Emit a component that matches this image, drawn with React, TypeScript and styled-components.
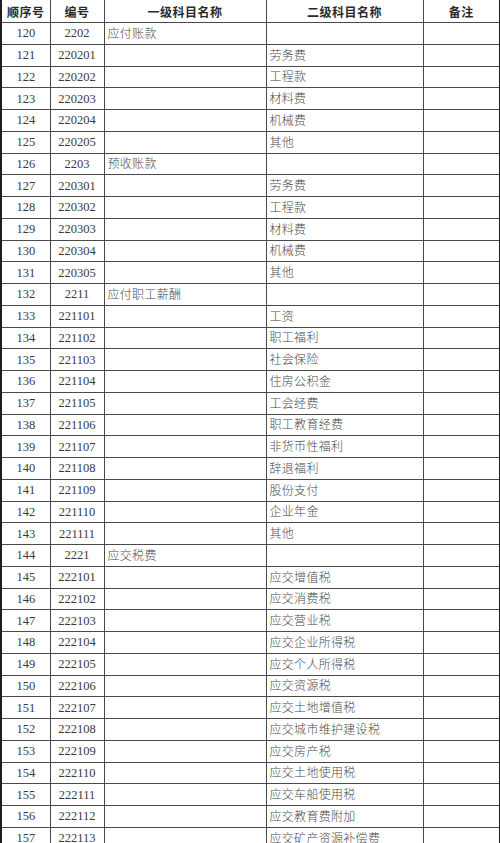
import styled, { createGlobalStyle } from "styled-components";
import { ReactElement } from "react";

const GlobalStyle = createGlobalStyle`
  html, body {
    margin: 0;
    padding: 0;
    background: #fff;
  }
`;

const Sheet = styled.table`
  width: 499px;
  table-layout: fixed;
  border-collapse: collapse;
  border-left: 2px solid #1e1e1e;
  border-right: 2px solid #1e1e1e;
  font-family: "Liberation Serif", "Noto Sans CJK SC", serif;
  font-size: 12.5px;
  color: #3a3a3a;
`;

const HeadRow = styled.tr`
  height: 22.7px;
`;

const HeadCell = styled.th`
  font-family: "Noto Sans CJK SC", sans-serif;
  font-weight: 700;
  font-size: 12px;
  color: #2a2a2a;
  text-align: center;
  padding: 0;
  border: 1px solid #4a4a4a;
  border-top: none;
  letter-spacing: 0.5px;
`;

const Row = styled.tr`
  height: 21.75px;
`;

const Cell = styled.td<{ $align?: "left" | "center" }>`
  padding: 0 0 0 ${(p) => (p.$align === "left" ? "3px" : "0")};
  text-align: ${(p) => p.$align ?? "center"};
  border: 1px solid #4a4a4a;
  white-space: nowrap;
  overflow: hidden;
  line-height: 1;
`;

const Hanzi = styled.span`
  font-family: "Noto Sans CJK SC", sans-serif;
  font-weight: 300;
  font-size: 12px;
  color: #4a4a4a;
  letter-spacing: 0.3px;
`;

type Item = { no: number; code: string; first?: string; second?: string };

const groups: { code: string; name: string; subs: string[] }[] = [
  { code: "2202", name: "应付账款", subs: ["劳务费", "工程款", "材料费", "机械费", "其他"] },
  { code: "2203", name: "预收账款", subs: ["劳务费", "工程款", "材料费", "机械费", "其他"] },
  {
    code: "2211",
    name: "应付职工薪酬",
    subs: [
      "工资",
      "职工福利",
      "社会保险",
      "住房公积金",
      "工会经费",
      "职工教育经费",
      "非货币性福利",
      "辞退福利",
      "股份支付",
      "企业年金",
      "其他",
    ],
  },
  {
    code: "2221",
    name: "应交税费",
    subs: [
      "应交增值税",
      "应交消费税",
      "应交营业税",
      "应交企业所得税",
      "应交个人所得税",
      "应交资源税",
      "应交土地增值税",
      "应交城市维护建设税",
      "应交房产税",
      "应交土地使用税",
      "应交车船使用税",
      "应交教育费附加",
      "应交矿产资源补偿费",
    ],
  },
];

const buildItems = (): Item[] => {
  const items: Item[] = [];
  let no = 120;
  groups.forEach((g) => {
    items.push({ no: no++, code: g.code, first: g.name });
    g.subs.forEach((s, i) => {
      items.push({ no: no++, code: g.code + String(i + 1).padStart(2, "0"), second: s });
    });
  });
  return items;
};

const App = (): ReactElement => {
  const items = buildItems();
  return (
    <>
      <GlobalStyle />
      <Sheet>
        <colgroup>
          <col style={{ width: 49 }} />
          <col style={{ width: 54 }} />
          <col style={{ width: 162 }} />
          <col style={{ width: 157 }} />
          <col style={{ width: 77 }} />
        </colgroup>
        <thead>
          <HeadRow>
            <HeadCell>顺序号</HeadCell>
            <HeadCell>编号</HeadCell>
            <HeadCell>一级科目名称</HeadCell>
            <HeadCell>二级科目名称</HeadCell>
            <HeadCell>备注</HeadCell>
          </HeadRow>
        </thead>
        <tbody>
          {items.map((it) => (
            <Row key={it.no}>
              <Cell>{it.no}</Cell>
              <Cell>{it.code}</Cell>
              <Cell $align="left">{it.first && <Hanzi>{it.first}</Hanzi>}</Cell>
              <Cell $align="left">{it.second && <Hanzi>{it.second}</Hanzi>}</Cell>
              <Cell />
            </Row>
          ))}
        </tbody>
      </Sheet>
    </>
  );
};

export default App;
